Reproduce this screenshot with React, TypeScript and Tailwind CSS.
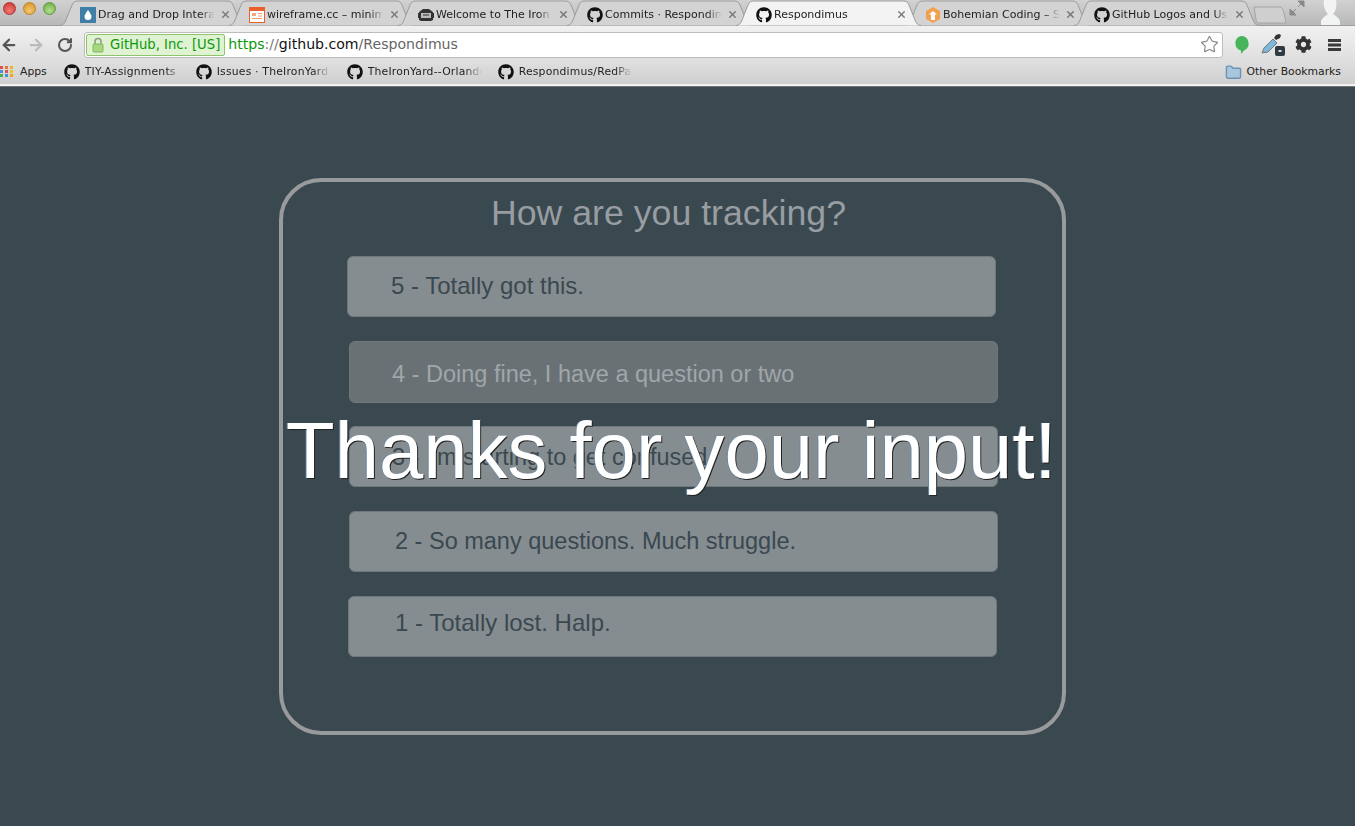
import React from "react";
import { FaGithub, FaCog } from "react-icons/fa";
import { ArrowLeft, ArrowRight, RotateCw, Star, Folder, X } from "lucide-react";

const uiFont = "font-['DejaVu_Sans',sans-serif]";

const tabs = [
  { title: "Drag and Drop Interactions", icon: "drop" },
  { title: "wireframe.cc – minimal wireframing", icon: "wire" },
  { title: "Welcome to The Iron Yard", icon: "iron" },
  { title: "Commits · Respondimus", icon: "gh" },
  { title: "Respondimus", icon: "gh", active: true },
  { title: "Bohemian Coding – Sketch", icon: "bohemian" },
  { title: "GitHub Logos and Usage", icon: "gh" },
];

const TabIcon = ({ kind }: { kind: string }) => {
  if (kind === "gh") return <FaGithub className="w-4 h-4 text-[#111] shrink-0" />;
  if (kind === "drop")
    return (
      <svg width="16" height="16" viewBox="0 0 16 16" className="shrink-0">
        <rect width="16" height="16" fill="#3f7ea6" />
        <path d="M8 3c2 3 3.500 4.500 3.500 6.500a3.500 3.500 0 0 1-7 0C4.500 7.500 6 6 8 3z" fill="#fff" />
      </svg>
    );
  if (kind === "wire")
    return (
      <svg width="16" height="16" viewBox="0 0 16 16" className="shrink-0">
        <rect x="0.500" y="0.500" width="15" height="15" fill="#fff" stroke="#e8602c" />
        <rect x="1" y="1" width="14" height="3" fill="#e8602c" />
        <rect x="3" y="6" width="4" height="3" fill="#f3a683" />
        <path d="M9 6.500h4M9 9h4M3 11.500h10" stroke="#f09a75" />
      </svg>
    );
  if (kind === "iron")
    return (
      <svg width="16" height="16" viewBox="0 0 16 16" className="shrink-0">
        <path d="M5 2h6l4 3v1h1v5h-1v2l-2 1H3l-2-1v-2H0V6h1V5z" fill="#333" />
        <rect x="3" y="6" width="10" height="5" fill="#bbb" />
        <path d="M5 8h6" stroke="#333" />
      </svg>
    );
  return (
    <svg width="16" height="16" viewBox="0 0 16 16" className="shrink-0">
      <path d="M8 0l7 4v8l-7 4-7-4V4z" fill="#f2a24e" />
      <path d="M8 4l4 3.500h-2V13H6V7.500H4z" fill="#fff" />
    </svg>
  );
};

const Tab = ({ title, icon, active }: { title: string; icon: string; active?: boolean }) => (
  <div className="relative w-[169px] h-full shrink-0 flex items-center pl-[12px] pr-[6px] pt-[4px]">
    <svg width="185" height="26" viewBox="0 0 185 26" className={`absolute left-[-8px] top-0 ${active ? "z-10" : ""}`}>
      <path
        d="M0 25.500C3 25.500 5 23 6 20L12 5C13 2 15 1 18 1H167C170 1 172 2 173 5L179 20C180 23 182 25.500 185 25.500"
        fill={active ? "#f3f3f3" : "#d3d3d3"}
        stroke="#9c9c9c"
      />
    </svg>
    <div className="relative z-20 flex items-center gap-[2px] w-full min-w-0">
      <TabIcon kind={icon} />
      <span className="flex-1 min-w-0 overflow-hidden whitespace-nowrap text-[11px] leading-[14px] text-[#222] [mask-image:linear-gradient(to_right,black_85%,transparent_97%)]">
        {title}
      </span>
      <X className="w-[11px] h-[11px] text-[#777] shrink-0" strokeWidth={3} />
    </div>
  </div>
);

const Bookmark = ({ label, width }: { label: string; width: string }) => (
  <div className="flex items-center gap-[5px]">
    <FaGithub className="w-4 h-4 text-[#111] shrink-0" />
    <span className={`${width} overflow-hidden whitespace-nowrap text-[10.800px] tracking-[0.2px] text-[#222] [mask-image:linear-gradient(to_right,black_85%,transparent)]`}>
      {label}
    </span>
  </div>
);

const rows = [
  { text: "5 - Totally got this.", box: "ml-[64px] h-[61px] pl-[43px] pb-[2px] text-[24px]", tone: "bg-[#868d90] text-[#3a4850]" },
  { text: "4 - Doing fine, I have a question or two", box: "ml-[66px] h-[62px] mt-[24px] pl-[42px] pt-[6px] text-[23.500px]", tone: "bg-[#6a7175] text-[#a0a6a9]" },
  { text: "3 - I'm starting to get confused", box: "ml-[66px] h-[61px] mt-[23px] pl-[42px] pt-[2px] text-[23.500px]", tone: "bg-[#868d90] text-[#3a4850]" },
  { text: "2 - So many questions. Much struggle.", box: "ml-[66px] h-[61px] mt-[24px] pl-[45px] text-[23.500px]", tone: "bg-[#868d90] text-[#3a4850]" },
  { text: "1 - Totally lost. Halp.", box: "ml-[65px] h-[61px] mt-[24px] pl-[46px] pb-[8px] text-[24px]", tone: "bg-[#868d90] text-[#3a4850]" },
];

export default function App() {
  return (
    <div className="relative w-[1355px] h-[826px] overflow-hidden bg-[#3a4850] font-['Liberation_Sans',Arial,sans-serif]">
      <header className={`${uiFont} h-[86px] flex flex-col bg-[#d6d6d6]`}>
        <div className="relative h-[26px] flex bg-gradient-to-b from-[#d2d2d2] to-[#b8b8b8] border-b border-[#9c9c9c]">
          <div className="w-[68px] shrink-0 flex items-center gap-[7px] pl-[3px] pb-[8px]">
            <span className="w-[13px] h-[13px] rounded-full bg-[radial-gradient(circle_at_50%_70%,#f47a72,#c9302c)] border border-[#a33]" />
            <span className="w-[13px] h-[13px] rounded-full bg-[radial-gradient(circle_at_50%_70%,#f7c66e,#d18f25)] border border-[#b58522]" />
            <span className="w-[13px] h-[13px] rounded-full bg-[radial-gradient(circle_at_50%_70%,#b4e08e,#64a63f)] border border-[#5e9a3e]" />
          </div>
          {tabs.map((t) => (
            <Tab key={t.title} title={t.title} icon={t.icon} active={t.active} />
          ))}
          <svg width="34" height="18" viewBox="0 0 34 18" className="mt-[6px] ml-[2px] shrink-0">
            <path d="M1 1H26C29 1 30 3 31 7L33 17H6C4 17 3 15 3 13z" fill="#cfcfcf" stroke="#a5a5a5" />
          </svg>
          <svg width="16" height="16" viewBox="0 0 16 16" className="ml-[2px] shrink-0">
            <path d="M9 1h6v6zM1 15V9l6 6zM13 3L9 7M3 13l4-4" fill="#8a8a8a" stroke="#8a8a8a" />
          </svg>
          <svg width="30" height="26" viewBox="0 0 30 26" className="ml-[11px] shrink-0">
            <path d="M8 0h12c1 6 0 11-3 14 3 2 6 4 7 7v4H5v-4c1-3 4-5 7-7C9 11 7 6 8 0z" fill="#f2f4f4" />
          </svg>
        </div>

        <div className="h-[36px] flex items-center bg-gradient-to-b from-[#f1f1f1] to-[#dedede] pt-[1px]">
          <ArrowLeft className="w-[18px] h-[18px] text-[#555] shrink-0" strokeWidth={3} />
          <ArrowRight className="w-[18px] h-[18px] text-[#bbb] shrink-0 ml-[9px]" strokeWidth={3} />
          <RotateCw className="w-[16px] h-[16px] text-[#555] shrink-0 ml-[12px]" strokeWidth={3} />
          <div className="ml-[11px] w-[1139px] h-[26px] flex items-center bg-white border border-[#bdbdbd] rounded-[3px]">
            <div className="h-[22px] ml-[1px] flex items-center gap-[5px] px-[4px] bg-[#dff2d2] border border-[#8fc46f] rounded-[2px] text-[#0a9a0a] text-[13.200px]">
              <svg width="14" height="16" viewBox="0 0 14 16" className="shrink-0">
                <path d="M4 7V4.500a3 3 0 0 1 6 0V7" fill="none" stroke="#8a9a80" strokeWidth="1.500" />
                <rect x="2" y="7" width="10" height="8" rx="1" fill="#a6d97f" stroke="#7cb95a" />
              </svg>
              GitHub, Inc. [US]
            </div>
            <div className="ml-[3px] flex-1 text-[14.100px] whitespace-nowrap">
              <span className="text-[#0a9a0a]">https</span>
              <span className="text-[#777]">://</span>
              <span className="text-[#111]">github.com</span>
              <span className="text-[#666]">/Respondimus</span>
            </div>
            <Star className="w-[19px] h-[19px] text-[#8a8a8a] mr-[3px]" strokeWidth={1.500} />
          </div>
          <svg width="18" height="20" viewBox="0 0 18 20" className="ml-[9px] shrink-0">
            <path d="M9 1a7.500 7.500 0 0 1 3 14.400L9 19v-3.500A7.500 7.500 0 0 1 9 1z" fill="#47b45c" />
          </svg>
          <svg width="26" height="24" viewBox="0 0 26 24" className="ml-[11px] shrink-0">
            <path d="M1 20l2-5 9-9 4 4-9 9z" fill="#7db7dc" stroke="#777" />
            <path d="M13 5l2 2 4-2 1-3-2-1-3 1z" fill="#333" />
            <rect x="14" y="13" width="10" height="10" rx="2" fill="#2f3a42" />
            <rect x="17.500" y="17" width="3" height="2" fill="#ddd" />
          </svg>
          <FaCog className="w-[17px] h-[17px] ml-[8px] text-[#333] shrink-0" />
          <svg width="17" height="14" viewBox="0 0 17 14" className="ml-[14px] shrink-0">
            <path d="M2 1h13v3H2zM2 5.500h13v3H2zM2 10h13v3H2z" fill="#3a3a3a" />
          </svg>
        </div>

        <div className="h-[24px] flex items-center bg-gradient-to-b from-[#dedede] to-[#cfcfcf] border-b-2 border-[#f2f2f2] shadow-[0_1px_0_#777] pb-[2px]">
          <svg width="14" height="14" viewBox="0 0 14 14" className="shrink-0">
            <rect x="0" y="1" width="3" height="3" fill="#d9534f" />
            <rect x="5" y="1" width="3" height="3" fill="#e8743b" />
            <rect x="10" y="1" width="3" height="3" fill="#e8b33b" />
            <rect x="0" y="5" width="3" height="3" fill="#4a90d9" />
            <rect x="5" y="5" width="3" height="3" fill="#d9534f" />
            <rect x="10" y="5" width="3" height="3" fill="#f0c419" />
            <rect x="0" y="9" width="3" height="3" fill="#4caf50" />
            <rect x="5" y="9" width="3" height="3" fill="#4a90d9" />
            <rect x="10" y="9" width="3" height="3" fill="#f0a419" />
          </svg>
          <span className="ml-[6px] text-[10.800px] text-[#222]">Apps</span>
          <div className="ml-[17px]"><Bookmark label="TIY-Assignments" width="w-[96px]" /></div>
          <div className="ml-[15px]"><Bookmark label="Issues · TheIronYard--Orlando" width="w-[113px]" /></div>
          <div className="ml-[17px]"><Bookmark label="TheIronYard--Orlando/FEE" width="w-[114px]" /></div>
          <div className="ml-[16px]"><Bookmark label="Respondimus/RedPanda" width="w-[113px]" /></div>
          <div className="ml-auto mr-[14px] flex items-center gap-[5px]">
            <Folder className="w-[17px] h-[17px] text-[#6a93b5] fill-[#a9c6dc]" />
            <span className="text-[10.800px] text-[#222]">Other Bookmarks</span>
          </div>
        </div>
      </header>

      <main className="pt-[92px] pl-[279px]">
        <section className="w-[787px] h-[557px] border-[4px] border-[#989a9c] rounded-[42px]">
          <h1 className="mr-[8px] h-[74px] pt-[9px] text-center text-[35.700px] leading-[44px] text-[#979da1]">
            How are you tracking?
          </h1>
          {rows.map((r) => (
            <div
              key={r.text}
              className={`${r.box} ${r.tone} w-[649px] flex items-center rounded-[6px] border border-[#70777b] whitespace-nowrap`}
            >
              {r.text}
            </div>
          ))}
        </section>
      </main>

      <div className="absolute left-[286px] top-[403px] text-[79.700px] leading-[96px] whitespace-nowrap text-white [text-shadow:1px_1px_0_#222,-1px_0_0_#6a8aa8]">
        Thanks for your input!
      </div>
    </div>
  );
}
